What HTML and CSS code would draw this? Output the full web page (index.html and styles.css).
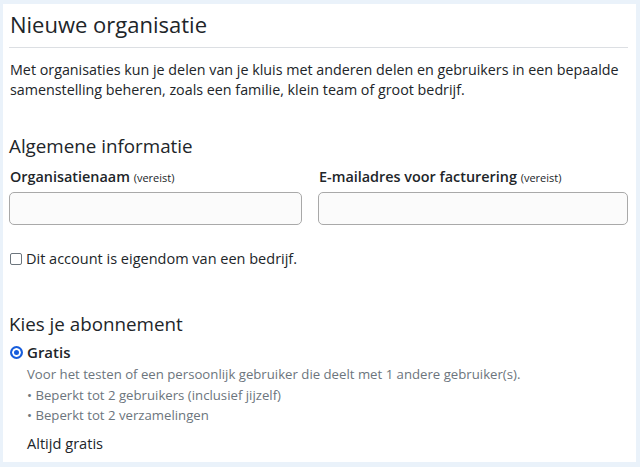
FILE: index.html
```html
<!DOCTYPE html>
<html lang="nl">
<head>
<meta charset="utf-8">
<title>Nieuwe organisatie</title>
<link rel="stylesheet" href="styles.css">
</head>
<body>
<main class="panel">
  <h1 class="title">Nieuwe organisatie</h1>
  <p class="intro">Met organisaties kun je delen van je kluis met anderen delen en gebruikers in een bepaalde samenstelling beheren, zoals een familie, klein team of groot bedrijf.</p>

  <h2 class="section">Algemene informatie</h2>
  <div class="fields">
    <div class="field">
      <label class="label">Organisatienaam <small>(vereist)</small></label>
      <input class="input" type="text">
    </div>
    <div class="field">
      <label class="label">E-mailadres voor facturering <small>(vereist)</small></label>
      <input class="input" type="text">
    </div>
  </div>
  <label class="check"><span class="box"></span>Dit account is eigendom van een bedrijf.</label>

  <h2 class="section plan-title">Kies je abonnement</h2>
  <div class="plan">
    <div class="plan-head"><span class="radio"></span><span class="plan-name">Gratis</span></div>
    <div class="plan-body">
      <p class="plan-desc">Voor het testen of een persoonlijk gebruiker die deelt met 1 andere gebruiker(s).</p>
      <ul class="features">
        <li>• Beperkt tot 2 gebruikers (inclusief jijzelf)</li>
        <li>• Beperkt tot 2 verzamelingen</li>
      </ul>
      <p class="price">Altijd gratis</p>
    </div>
  </div>
</main>
</body>
</html>
```

FILE: styles.css
```css
html, body {
  margin: 0;
  padding: 0;
}
body {
  background: #eaf2fa;
  font-family: "Open Sans", "Noto Sans", sans-serif;
  color: #212529;
  padding: 4px 4px 5px 3px;
  height: 467px;
  box-sizing: border-box;
  overflow: hidden;
}
.panel {
  background: #fff;
  height: 100%;
  padding: 0 8px 0 6px;
  box-sizing: border-box;
  overflow: hidden;
}
.title {
  margin: 0;
  padding: 5px 0 7px 1px;
  font-size: 22px;
  font-weight: 400;
  line-height: 31px;
  border-bottom: 1px solid #dcdfe3;
}
.intro {
  margin: 12px 0 0 1px;
  font-size: 14.3px;
  line-height: 20px;
}
.section {
  margin: 33px 0 0 0;
  font-size: 18.8px;
  font-weight: 400;
  line-height: 26px;
}
.fields {
  display: grid;
  grid-template-columns: 293px 310px;
  column-gap: 16px;
  margin-top: 8px;
}
.label {
  display: block;
  font-size: 14.4px;
  font-weight: 600;
  line-height: 20px;
  margin-bottom: 4px;
  margin-left: 1px;
}
.label small {
  font-size: 11px;
  font-weight: 400;
}
.input {
  display: block;
  width: 100%;
  height: 33px;
  box-sizing: border-box;
  border: 1px solid #a9a9a9;
  border-radius: 5px;
  background: #fbfbfb;
  margin: 0;
}
.check {
  display: flex;
  align-items: center;
  margin-top: 24px;
  font-size: 14.5px;
  line-height: 20px;
  margin-left: 1px;
}
.box {
  width: 10px;
  height: 10px;
  border: 1px solid #6c757d;
  border-radius: 2px;
  margin-right: 4px;
}
.plan-title {
  margin-top: 42px;
}
.plan {
  margin-top: 5px;
  margin-left: 1px;
}
.plan-head {
  display: flex;
  align-items: center;
}
.radio {
  width: 9px;
  height: 9px;
  border-radius: 50%;
  border: 2px solid #175ddc;
  background: #175ddc;
  box-shadow: inset 0 0 0 2px #fff;
  margin-right: 4px;
}
.plan-name {
  font-size: 15px;
  font-weight: 600;
  line-height: 20px;
}
.plan-body {
  padding-left: 17px;
}
.plan-desc {
  margin: 2px 0 0;
  font-size: 13.2px;
  line-height: 20px;
  color: #6c757d;
}
.features {
  list-style: none;
  margin: 1px 0 0;
  padding: 0;
  font-size: 13.2px;
  line-height: 20px;
  color: #6c757d;
}
.price {
  margin: 8px 0 0;
  font-size: 14.6px;
  line-height: 20px;
}
```
